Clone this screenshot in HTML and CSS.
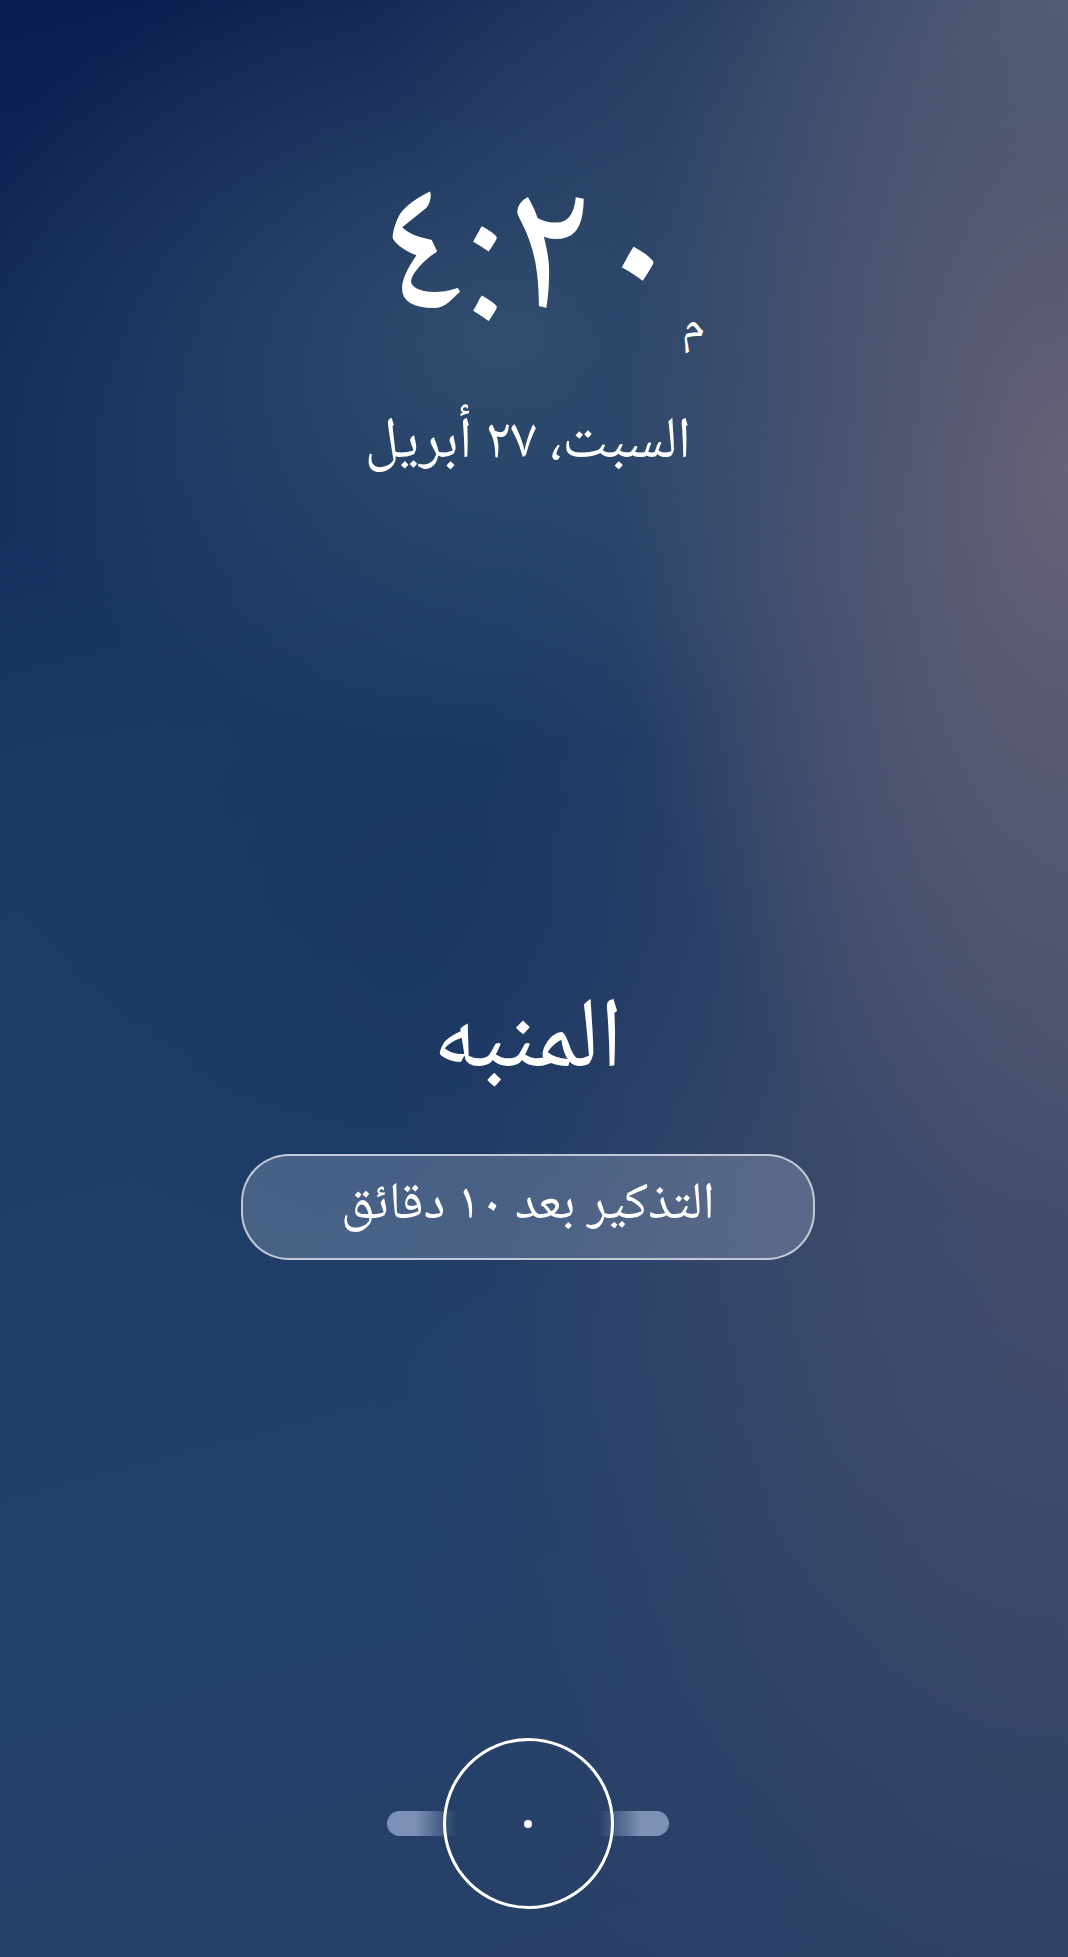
FILE: index.html
```html
<!DOCTYPE html>
<html lang="ar" dir="rtl">
<head>
<meta charset="utf-8">
<title>المنبه</title>
<link rel="stylesheet" href="styles.css">
</head>
<body>
<main class="screen">
  <section class="clock">
    <div class="time" dir="ltr"><span class="digits">٤:٢٠</span><span class="ampm">م</span></div>
    <div class="date">السبت، ٢٧ أبريل</div>
  </section>
  <section class="alarm">
    <h1 class="title">المنبه</h1>
    <button class="snooze">التذكير بعد ١٠ دقائق</button>
  </section>
  <section class="slider">
    <div class="track"><span class="tail left"></span><span class="tail right"></span></div>
    <div class="knob"><span class="dot"></span></div>
  </section>
</main>
</body>
</html>
```
FILE: styles.css
```css
html, body {
  margin: 0;
  padding: 0;
}
body {
  font-family: "Noto Naskh Arabic", "Noto Sans", sans-serif;
  color: #fff;
}
.screen {
  width: 1068px;
  height: 1957px;
  box-sizing: border-box;
  padding-right: 12px;
  display: flex;
  flex-direction: column;
  align-items: center;
  overflow: hidden;
  background:
    radial-gradient(ellipse 460px 760px at 1068px 470px, rgba(110,102,120,0.9), rgba(110,102,120,0) 100%),
    radial-gradient(ellipse 700px 420px at 1068px 0px, rgba(72,92,118,0.9), rgba(72,92,118,0) 100%),
    radial-gradient(ellipse 560px 420px at 500px 330px, rgba(68,98,122,0.6), rgba(68,98,122,0) 100%),
    radial-gradient(ellipse 420px 420px at 440px 900px, rgba(25,52,95,0.6), rgba(25,52,95,0) 100%),
    radial-gradient(ellipse 600px 1000px at 1068px 1000px, rgba(88,90,112,0.5), rgba(88,90,112,0) 100%),
    radial-gradient(ellipse 700px 900px at 1068px 1300px, rgba(72,72,102,0.55), rgba(72,72,102,0) 100%),
    linear-gradient(165deg, #0a1d4e 0%, #1c3a66 35%, #21406a 70%, #2a4066 100%);
}
.clock {
  margin-top: 169px;
  display: flex;
  flex-direction: column;
  align-items: center;
}
.time {
  position: relative;
  line-height: 1;
}
.digits {
  display: block;
  font-size: 195px;
  font-weight: 400;
  line-height: 1;
}
.ampm {
  position: absolute;
  left: 100%;
  top: 136px;
  margin-left: 2px;
  font-size: 48px;
  line-height: 1;
}
.date {
  margin-top: 52px;
  font-size: 58px;
  line-height: 1;
}
.alarm {
  margin-top: 520px;
  display: flex;
  flex-direction: column;
  align-items: center;
}
.title {
  margin: 0;
  font-size: 100px;
  font-weight: 400;
  line-height: 1;
}
.snooze {
  margin-top: 60px;
  width: 574px;
  height: 106px;
  box-sizing: border-box;
  border: 2.5px solid rgba(215,220,232,0.85);
  border-radius: 48px;
  background: rgba(190,200,220,0.26);
  color: #fff;
  font-family: inherit;
  font-size: 52px;
  line-height: 1;
}
.slider {
  margin-top: auto;
  margin-bottom: 48px;
  position: relative;
  width: 282px;
  height: 171px;
  display: flex;
  align-items: center;
  justify-content: center;
}
.track {
  position: absolute;
  inset: 73px 0 auto 0;
  height: 25px;
}
.tail {
  position: absolute;
  top: 0;
  width: 70px;
  height: 25px;
}
.tail.left {
  left: 0;
  border-radius: 13px 0 0 13px;
  background: linear-gradient(to right, rgba(140,158,195,0.85), rgba(140,158,195,0.85) 40%, rgba(140,158,195,0));
}
.tail.right {
  right: 0;
  border-radius: 0 13px 13px 0;
  background: linear-gradient(to left, rgba(140,158,195,0.85), rgba(140,158,195,0.85) 40%, rgba(140,158,195,0));
}
.knob {
  position: relative;
  width: 171px;
  height: 171px;
  box-sizing: border-box;
  border: 3.5px solid #fff;
  border-radius: 50%;
  display: flex;
  align-items: center;
  justify-content: center;
}
.dot {
  width: 8px;
  height: 8px;
  border-radius: 50%;
  background: #fff;
}
```
